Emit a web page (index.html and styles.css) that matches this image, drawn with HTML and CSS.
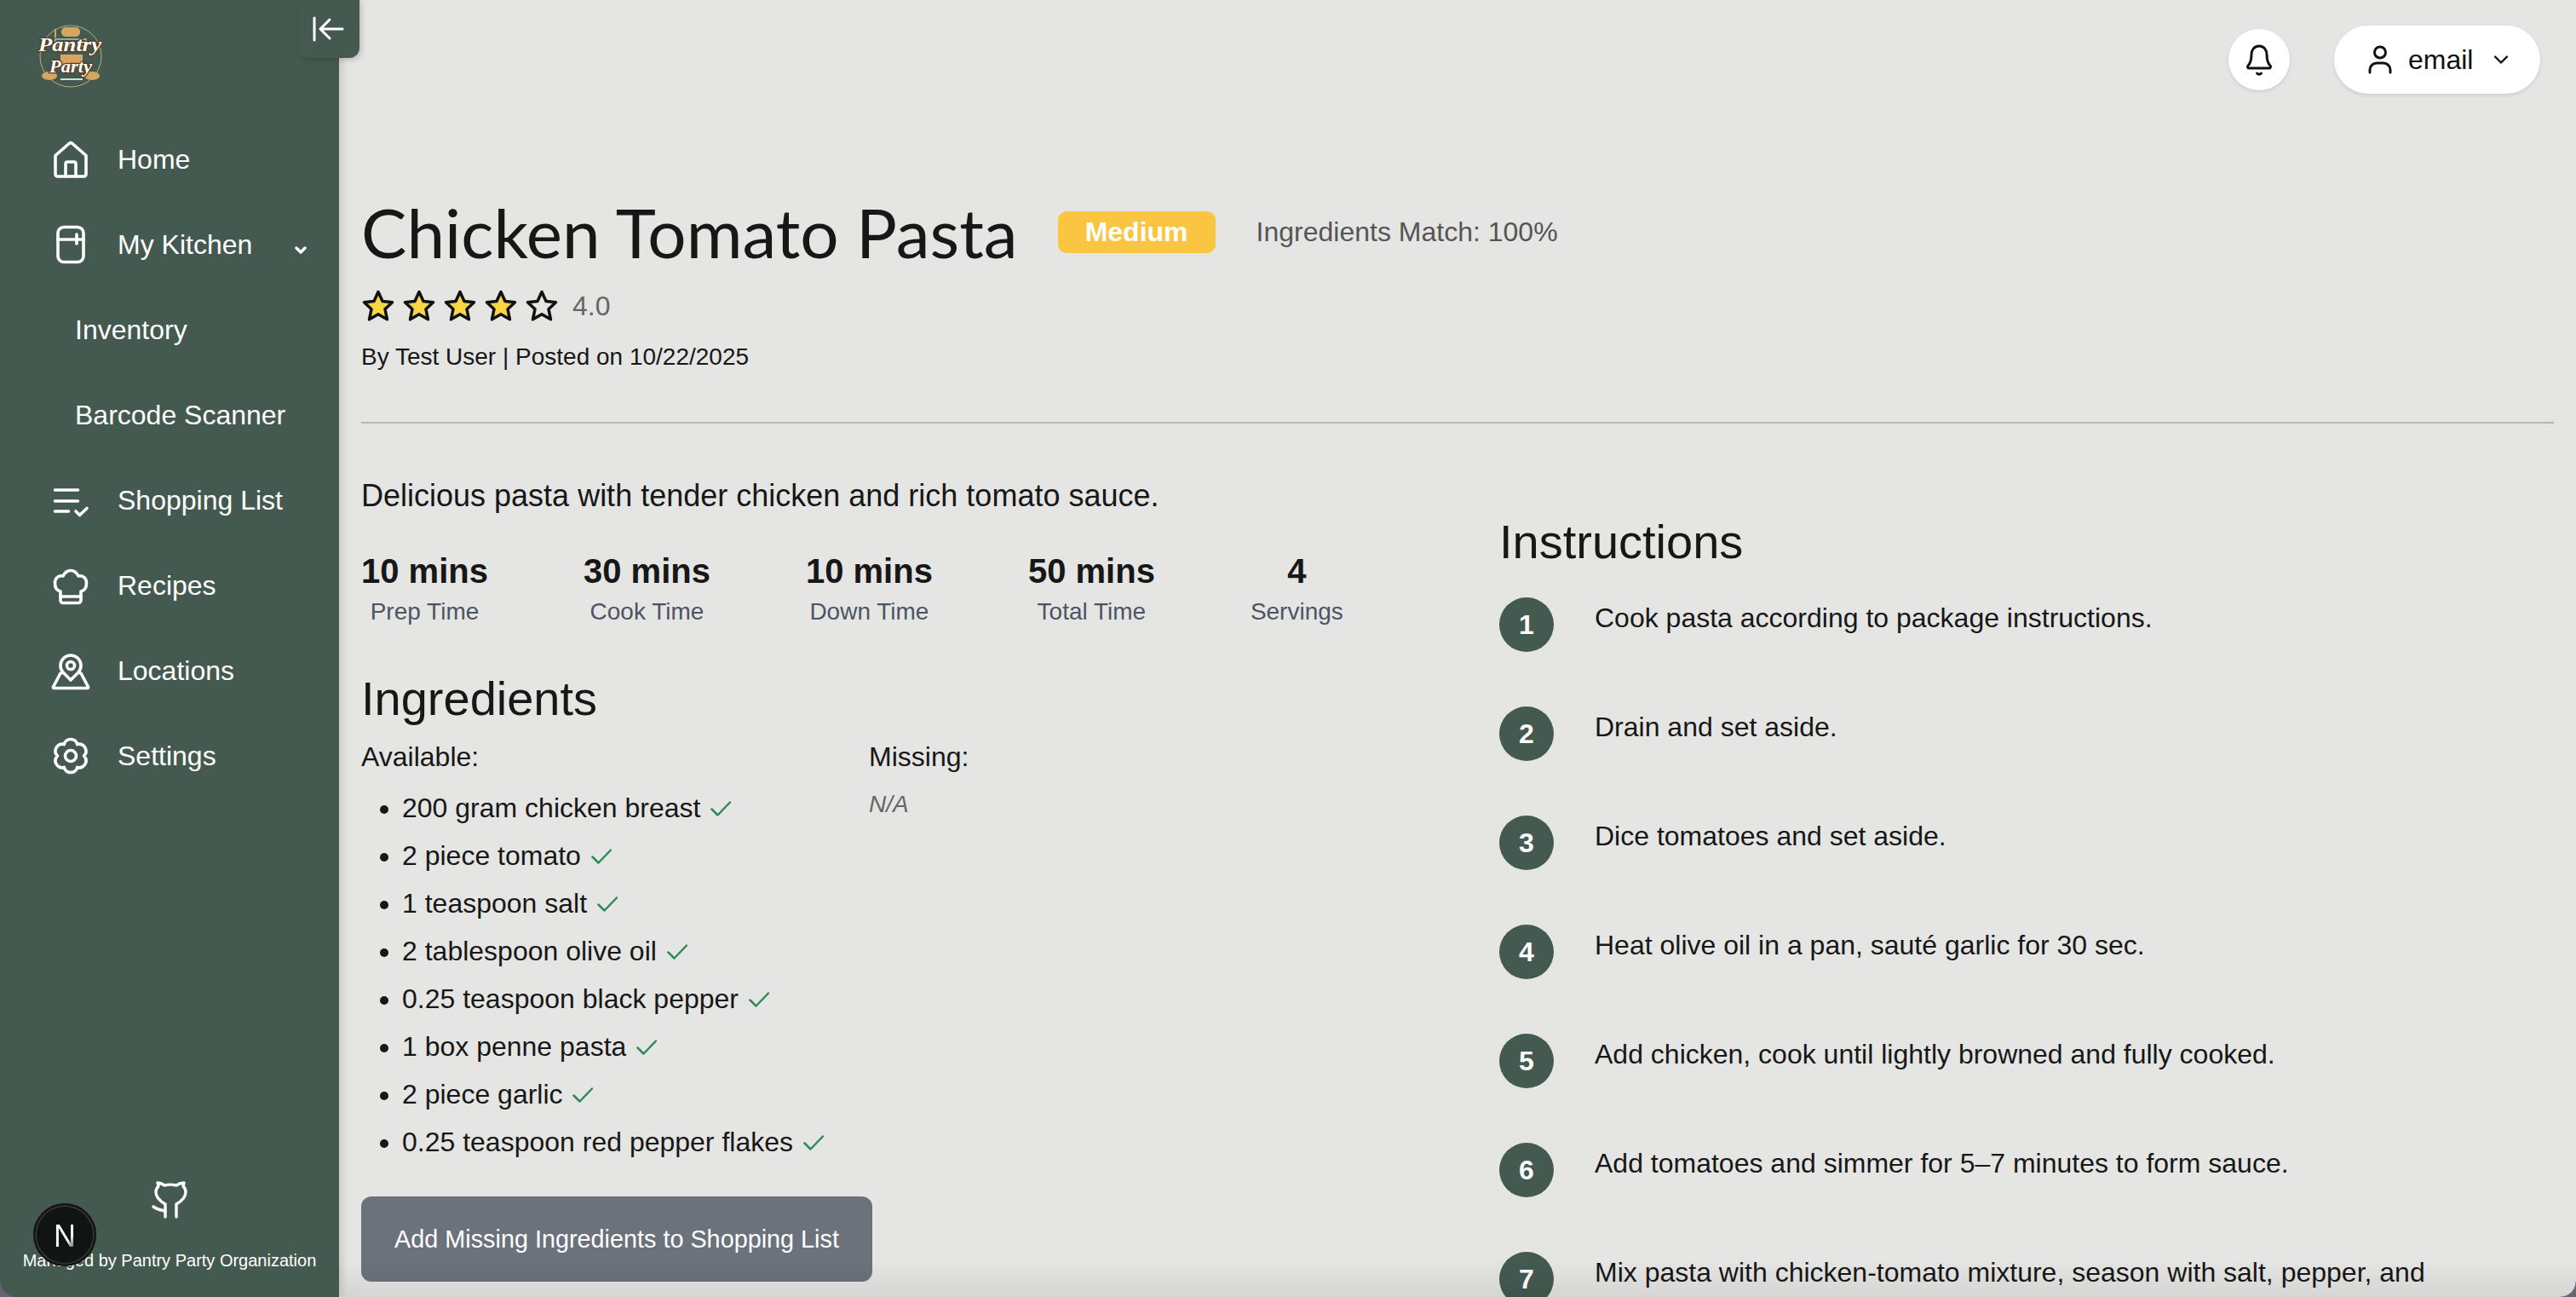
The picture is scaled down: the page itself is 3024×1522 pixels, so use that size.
FILE: index.html
```html
<!DOCTYPE html>
<html lang="en">
<head>
<meta charset="utf-8">
<title>Chicken Tomato Pasta</title>
<link rel="stylesheet" href="styles.css">
</head>
<body>
<div class="app">
  <aside class="sidebar">
    <button class="collapse" aria-label="Collapse">
      <svg width="40" height="40" viewBox="0 0 40 40" fill="none" stroke="#fff" stroke-width="3" stroke-linecap="round" stroke-linejoin="round"><path d="M3 7v26M36 20H10M21 9 10 20l11 11"/></svg>
    </button>
    <div class="logo">
      <svg width="84" height="84" viewBox="0 0 84 84">
        <circle cx="42" cy="42" r="36" fill="#445a50" stroke="#b9b27e" stroke-width="1"/>
        <rect x="31" y="8" width="22" height="11" rx="5" fill="#d9a662"/>
        <path d="M24 22h36v8H24z" fill="none" stroke="#a9c4bc" stroke-width="1.500"/>
        <path d="M24 10v10" stroke="#d9a662" stroke-width="2"/>
        <rect x="30" y="40" width="26" height="16" fill="#d9a662"/>
        <ellipse cx="17" cy="65" rx="9" ry="5" fill="#d9a662"/>
        <ellipse cx="67" cy="65" rx="9" ry="5" fill="#d9a662"/>
        <path d="M30 69h26" stroke="#cfe0da" stroke-width="2"/>
        <text x="41" y="36" class="logo-text logo-a" textLength="74" lengthAdjust="spacingAndGlyphs">Pantry</text>
        <text x="42" y="61" class="logo-text logo-b" textLength="50" lengthAdjust="spacingAndGlyphs">Party</text>
      </svg>
    </div>
    <nav class="nav">
      <a class="nav-item">
        <svg class="nav-icon" viewBox="0 0 48 48" fill="none" stroke="#fff" stroke-width="3.600" stroke-linecap="round" stroke-linejoin="round"><path d="M6 19.500 22 5.500a3 3 0 0 1 4 0l16 14v22a2.500 2.500 0 0 1-2.500 2.500h-31a2.500 2.500 0 0 1-2.500-2.500z"/><path d="M18 44V29a2 2 0 0 1 2-2h8a2 2 0 0 1 2 2v15"/></svg>
        <span>Home</span>
      </a>
      <a class="nav-item">
        <svg class="nav-icon" viewBox="0 0 48 48" fill="none" stroke="#fff" stroke-width="3.600" stroke-linecap="round" stroke-linejoin="round"><rect x="9" y="3.500" width="30" height="41" rx="7"/><path d="M9 18h30M31 12v11"/></svg>
        <span class="grow">My Kitchen</span>
        <svg class="caret" width="14" height="12" viewBox="0 0 14 12" fill="none" stroke="#fff" stroke-width="3.500" stroke-linecap="round" stroke-linejoin="round"><path d="M2 3l5 5 5-5"/></svg>
      </a>
      <a class="nav-item sub">Inventory</a>
      <a class="nav-item sub">Barcode Scanner</a>
      <a class="nav-item">
        <svg class="nav-icon" viewBox="0 0 48 48" fill="none" stroke="#fff" stroke-width="3.600" stroke-linecap="round" stroke-linejoin="round"><path d="M5.500 12h27M5.500 25h27M5.500 37h16M30 37l4.500 4.500 8.500-8"/></svg>
        <span>Shopping List</span>
      </a>
      <a class="nav-item">
        <svg class="nav-icon" viewBox="0 0 48 48" fill="none" stroke="#fff" stroke-width="3.600" stroke-linecap="round" stroke-linejoin="round"><path d="M12 31C7 30 5.500 25 5.500 21 5.500 15 10 12 15 13c2-4 5.500-6.500 9-6.500S31 9 33 13c5-1 9.500 2 9.500 8 0 4-1.500 9-6.500 10v10.500a3 3 0 0 1-3 3H15a3 3 0 0 1-3-3z"/><path d="M12 37h24"/></svg>
        <span>Recipes</span>
      </a>
      <a class="nav-item">
        <svg class="nav-icon" viewBox="0 0 48 48" fill="none" stroke="#fff" stroke-width="3.600" stroke-linecap="round" stroke-linejoin="round"><path d="M24 35 15.500 26.500a12 12 0 1 1 17 0z"/><circle cx="24" cy="18" r="4.500"/><path d="M13 27h-1L3.500 43a1 1 0 0 0 1 1.500h39a1 1 0 0 0 1-1.500L36 27h-1"/></svg>
        <span>Locations</span>
      </a>
      <a class="nav-item">
        <svg class="nav-icon" viewBox="0 0 48 48" fill="none" stroke="#fff" stroke-width="3.600" stroke-linecap="round" stroke-linejoin="round"><path d="M16.250 10.600C18 2.500 30 2.500 31.750 10.600 39.500 8 45.500 18 39.500 24 45.500 30 39.500 40 31.750 37.400 30 45.500 18 45.500 16.250 37.400 8.500 40 2.500 30 8.500 24 2.500 18 8.500 8 16.250 10.600z"/><circle cx="24" cy="24" r="6.500"/></svg>
        <span>Settings</span>
      </a>
    </nav>
    <footer class="side-foot">
      <svg width="44" height="46" viewBox="0 0 44 46" fill="none" stroke="#fff" stroke-width="3.400" stroke-linecap="round" stroke-linejoin="round"><path d="M17 43V28C10 24 6 20 6 14c0-3 1-5 3-7L8 3c3 0 5 1 8 3 4-1 10-1 14 0 3-2 6-3 9-3l-1 4c2 2 3 4 3 7 0 6-4 10-11 14v15"/><path d="M3 31c3 2 6 4 14 5"/></svg>
      <p class="managed">Managed by Pantry Party Organization</p>
    </footer>
    <div class="next-badge"><span class="next-n">N</span></div>
  </aside>

  <main class="main">
    <header class="topbar">
      <button class="bell" aria-label="Notifications">
        <svg width="40" height="40" viewBox="0 0 40 40" fill="none" stroke="#111" stroke-width="3" stroke-linecap="round" stroke-linejoin="round"><path d="M20 4c-6 0-9 5-9 10 0 7-2 11-4 13-1 1-.5 3 1 3h24c1.500 0 2-2 1-3-2-2-4-6-4-13 0-5-3-10-9-10z"/><path d="M17.500 36c1.500 1.500 3.500 1.500 5 0"/></svg>
      </button>
      <button class="user">
        <svg width="40" height="40" viewBox="0 0 40 40" fill="none" stroke="#111" stroke-width="3" stroke-linecap="round" stroke-linejoin="round"><circle cx="20" cy="11.500" r="6.500"/><path d="M8 35v-3a8 8 0 0 1 8-8h8a8 8 0 0 1 8 8v3"/></svg>
        <span class="user-name">email</span>
        <svg width="24" height="24" viewBox="0 0 24 24" fill="none" stroke="#111" stroke-width="2.400" stroke-linecap="round" stroke-linejoin="round"><path d="M5 8.500l7 7 7-7"/></svg>
      </button>
    </header>

    <section class="recipe-head">
      <div class="title-row">
        <h1 class="title">Chicken Tomato Pasta</h1>
        <span class="badge">Medium</span>
        <span class="match">Ingredients Match: 100%</span>
      </div>
      <div class="rating">
        <svg class="stars" width="240" height="40" viewBox="0 0 240 40" stroke="#111" stroke-width="3.500" stroke-linejoin="round">
          <defs><path id="star" d="M20 3.500l5 11 11.500 1.300-8.500 8 2.500 12-10.500-6-10.500 6 2.500-12-8.500-8L15 14.500z"/></defs>
          <use href="#star" fill="#fbd644"/>
          <use href="#star" x="48" fill="#fbd644"/>
          <use href="#star" x="96" fill="#fbd644"/>
          <use href="#star" x="144" fill="#fbd644"/>
          <use href="#star" x="192" fill="none"/>
        </svg>
        <span class="rating-num">4.0</span>
      </div>
      <p class="byline">By Test User | Posted on 10/22/2025</p>
    </section>
    <hr class="rule">

    <section class="columns">
      <div class="col-left">
        <p class="desc">Delicious pasta with tender chicken and rich tomato sauce.</p>
        <div class="stats">
          <div class="stat"><strong>10 mins</strong><span>Prep Time</span></div>
          <div class="stat"><strong>30 mins</strong><span>Cook Time</span></div>
          <div class="stat"><strong>10 mins</strong><span>Down Time</span></div>
          <div class="stat"><strong>50 mins</strong><span>Total Time</span></div>
          <div class="stat"><strong>4</strong><span>Servings</span></div>
        </div>
        <h2 class="h2 ing-title">Ingredients</h2>
        <div class="ing-grid">
          <div>
            <p class="ing-label">Available:</p>
            <ul class="ing-list">
              <li>200 gram chicken breast <svg class="check" viewBox="0 0 24 18"><path d="M1.500 9.500l7 7L23 1.500"/></svg></li>
              <li>2 piece tomato <svg class="check" viewBox="0 0 24 18"><path d="M1.500 9.500l7 7L23 1.500"/></svg></li>
              <li>1 teaspoon salt <svg class="check" viewBox="0 0 24 18"><path d="M1.500 9.500l7 7L23 1.500"/></svg></li>
              <li>2 tablespoon olive oil <svg class="check" viewBox="0 0 24 18"><path d="M1.500 9.500l7 7L23 1.500"/></svg></li>
              <li>0.25 teaspoon black pepper <svg class="check" viewBox="0 0 24 18"><path d="M1.500 9.500l7 7L23 1.500"/></svg></li>
              <li>1 box penne pasta <svg class="check" viewBox="0 0 24 18"><path d="M1.500 9.500l7 7L23 1.500"/></svg></li>
              <li>2 piece garlic <svg class="check" viewBox="0 0 24 18"><path d="M1.500 9.500l7 7L23 1.500"/></svg></li>
              <li>0.25 teaspoon red pepper flakes <svg class="check" viewBox="0 0 24 18"><path d="M1.500 9.500l7 7L23 1.500"/></svg></li>
            </ul>
          </div>
          <div>
            <p class="ing-label">Missing:</p>
            <p class="na">N/A</p>
          </div>
        </div>
        <button class="add-btn">Add Missing Ingredients to Shopping List</button>
      </div>
      <div class="col-right">
        <h2 class="h2 ins-title">Instructions</h2>
        <ol class="steps">
          <li class="step"><span class="num">1</span><p>Cook pasta according to package instructions.</p></li>
          <li class="step"><span class="num">2</span><p>Drain and set aside.</p></li>
          <li class="step"><span class="num">3</span><p>Dice tomatoes and set aside.</p></li>
          <li class="step"><span class="num">4</span><p>Heat olive oil in a pan, sauté garlic for 30 sec.</p></li>
          <li class="step"><span class="num">5</span><p>Add chicken, cook until lightly browned and fully cooked.</p></li>
          <li class="step"><span class="num">6</span><p>Add tomatoes and simmer for 5–7 minutes to form sauce.</p></li>
          <li class="step"><span class="num">7</span><p>Mix pasta with chicken-tomato mixture, season with salt, pepper, and</p></li>
        </ol>
      </div>
    </section>
  </main>
</div>
<div class="bottom-fade"></div>
<div class="corner corner-left"></div>
<div class="corner corner-right"></div>
</body>
</html>
```
FILE: styles.css
```css
* { box-sizing: border-box; }
html, body { margin: 0; height: 100%; overflow: hidden; }
body { background: #e5e5e3; color: #171717; font-family: "Liberation Sans", Arial, sans-serif; position: relative; }
p, h1, h2, ul, ol { margin: 0; padding: 0; }
button { font-family: inherit; border: 0; cursor: pointer; }

.app { display: flex; height: 1522px; }

.sidebar { position: relative; flex: 0 0 398px; background: #445a50; color: #fff; display: flex; flex-direction: column; box-shadow: 4px 0 8px rgba(0,0,0,.12); z-index: 2; }
.collapse { position: absolute; top: 0; left: 350px; width: 72px; height: 68px; background: #445a50; border-radius: 0 0 12px 12px; box-shadow: 2px 2px 6px rgba(0,0,0,.2); display: flex; align-items: center; justify-content: center; padding: 0; }
.logo { height: 137px; padding: 24px 0 0 41px; }
.logo-text { font-family: "Liberation Serif", serif; font-style: italic; font-weight: 700; fill: #fff; stroke: #5a3a1c; stroke-width: 2.500px; paint-order: stroke; text-anchor: middle; }
.logo-a { font-size: 24px; }
.logo-b { font-size: 22px; }

.nav { display: flex; flex-direction: column; }
.nav-item { height: 100px; display: flex; align-items: center; gap: 31px; padding-left: 59px; padding-right: 38px; font-size: 32px; color: #fff; }
.nav-item.sub { padding-left: 88px; }
.nav-icon { width: 48px; height: 48px; flex: none; }
.grow { flex: 1; }
.caret { margin-top: 14px; flex: none; }

.side-foot { margin-top: auto; padding-bottom: 30px; display: flex; flex-direction: column; align-items: center; gap: 35px; }
.managed { font-size: 20px; line-height: 26px; color: #fff; }
.next-badge { position: absolute; left: 39px; top: 1412px; width: 74px; height: 74px; padding-top: 3px; border-radius: 50%; background: #101513; border: 2px solid #111; box-shadow: inset 0 0 0 2px #333; display: flex; align-items: center; justify-content: center; }
.next-n { font-size: 36px; line-height: 1; color: #fff; background: linear-gradient(135deg, #fff 62%, #222 100%); -webkit-background-clip: text; background-clip: text; -webkit-text-fill-color: transparent; }

.main { flex: 1; min-width: 0; padding: 0 26px 0 26px; overflow: hidden; }
.topbar { height: 224px; padding: 30px 16px 0 0; display: flex; justify-content: flex-end; align-items: flex-start; gap: 52px; }
.bell { width: 72px; height: 72px; margin-top: 4px; border-radius: 50%; background: #fff; box-shadow: 0 2px 4px rgba(0,0,0,.1); display: flex; align-items: center; justify-content: center; padding: 0; }
.user { width: 242px; height: 80px; border-radius: 40px; background: #fff; box-shadow: 0 2px 4px rgba(0,0,0,.1); display: flex; align-items: center; padding: 0 0 0 34px; gap: 13px; color: #111; }
.user-name { font-size: 32px; width: 84px; text-align: left; }

.title-row { display: flex; align-items: center; }
.title { font-family: Lato, sans-serif; font-weight: 400; font-size: 80px; line-height: 96px; color: #171717; }
.badge { margin-left: 47px; width: 185px; height: 49px; border-radius: 10px; background: #fac642; color: #fff; font-size: 32px; font-weight: 700; display: flex; align-items: center; justify-content: center; }
.match { margin-left: 48px; font-size: 32px; color: #555; }
.rating { display: flex; align-items: center; gap: 8px; height: 44px; margin-top: 17px; }
.stars { display: block; }
.rating-num { font-size: 32px; color: #666; }
.byline { font-size: 28px; line-height: 40px; margin-top: 18px; }
.rule { border: 0; border-top: 2px solid #b5b5b3; margin: 56px 0 0 0; }

.columns { display: grid; grid-template-columns: 1336px 1fr; }
.col-left { padding-top: 63px; }
.desc { font-size: 36px; line-height: 44px; }
.stats { display: flex; gap: 112px; margin-top: 40px; }
.stat { display: flex; flex-direction: column; align-items: center; }
.stat strong { font-size: 40px; line-height: 52px; color: #171717; }
.stat span { font-size: 28px; line-height: 40px; margin-top: 2px; color: #4b5563; }
.h2 { font-weight: 400; font-size: 56px; line-height: 72px; color: #171717; }
.ing-title { margin-top: 46px; }
.ing-grid { display: grid; grid-template-columns: 596px 1fr; margin-top: 10px; }
.ing-label { font-size: 32px; line-height: 44px; }
.ing-list { list-style: disc; padding-left: 48px; margin-top: 10px; }
.ing-list li { font-size: 32px; line-height: 56px; }
.check { width: 24px; height: 18px; margin-left: 3px; vertical-align: 1px; fill: none; stroke: #2f8a57; stroke-width: 2.500; stroke-linecap: round; stroke-linejoin: round; }
.na { font-size: 28px; font-style: italic; color: #666; margin-top: 14px; line-height: 40px; }
.add-btn { margin-top: 36px; width: 600px; height: 100px; border-radius: 12px; background: #6c727b; color: #fff; font-size: 28.800px; display: block; }

.col-right { padding-top: 103px; }
.steps { list-style: none; margin-top: 29px; }
.step { display: flex; height: 128px; gap: 48px; align-items: flex-start; }
.num { flex: none; width: 64px; height: 64px; border-radius: 50%; background: #445a50; color: #fff; font-size: 32px; font-weight: 700; display: flex; align-items: center; justify-content: center; }
.step p { font-size: 32px; line-height: 44px; margin-top: 2px; }

.bottom-fade { position: absolute; left: 398px; right: 0; bottom: 0; height: 44px; background: linear-gradient(to bottom, rgba(0,0,0,0), rgba(0,0,0,.07)); pointer-events: none; z-index: 1; }
.corner { position: absolute; bottom: 0; width: 18px; height: 18px; pointer-events: none; z-index: 3; }
.corner-left { left: 0; background: radial-gradient(circle at 100% 0, transparent 17px, #6b6273 18px); }
.corner-right { right: 0; background: radial-gradient(circle at 0 0, transparent 17px, #6b6273 18px); }
```
